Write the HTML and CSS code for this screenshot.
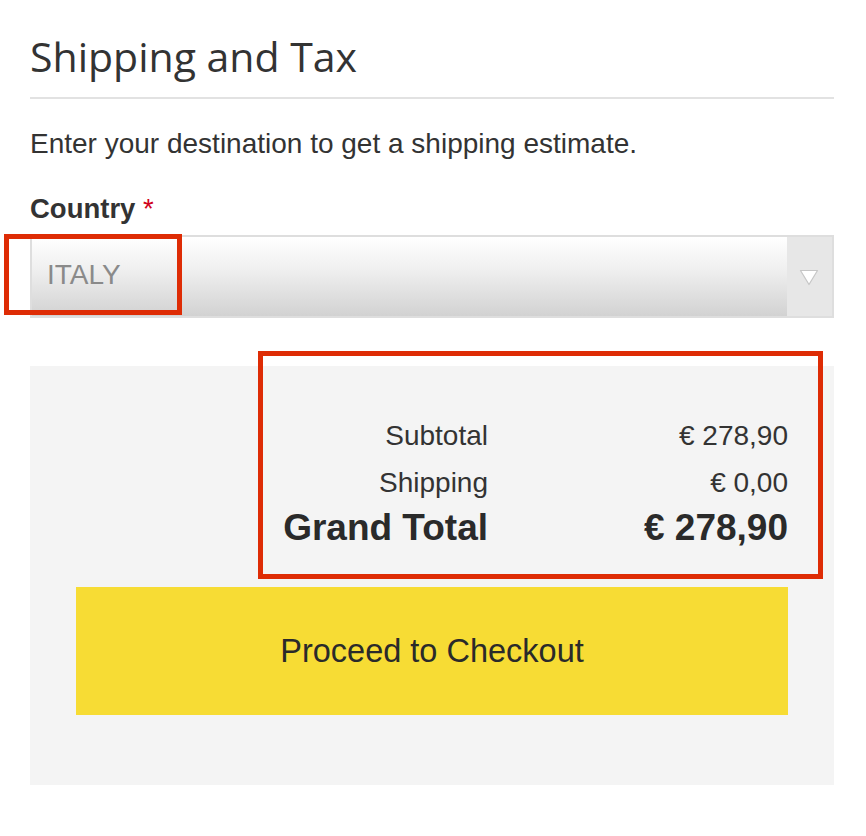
FILE: index.html
```html
<!DOCTYPE html>
<html lang="en">
<head>
<meta charset="utf-8">
<title>Shipping and Tax</title>
<link rel="stylesheet" href="styles.css">
</head>
<body>
<div class="page">
  <h1 class="title">Shipping and Tax</h1>
  <p class="intro">Enter your destination to get a shipping estimate.</p>
  <label class="label">Country <span class="req">*</span></label>
  <div class="select">
    <span class="select-value">ITALY</span>
    <span class="select-arrow">
      <svg width="20" height="17" viewBox="0 0 20 17"><polygon points="1.5,1.5 18.5,1.5 10,15.5" fill="#ffffff" stroke="#c6c6c6" stroke-width="1.2" stroke-linejoin="round"/></svg>
    </span>
  </div>
  <div class="panel">
    <div class="totals">
      <div class="t-label">Subtotal</div><div class="t-value">€ 278,90</div>
      <div class="t-label">Shipping</div><div class="t-value">€ 0,00</div>
      <div class="t-label grand">Grand Total</div><div class="t-value grand">€ 278,90</div>
    </div>
    <button class="checkout">Proceed to Checkout</button>
  </div>
  <div class="mark mark-1"></div>
  <div class="mark mark-2"></div>
</div>
</body>
</html>
```
FILE: styles.css
```css
html, body {
  margin: 0;
  padding: 0;
  background: #fff;
}
.page {
  position: relative;
  width: 804px;
  padding: 32px 0 0 30px;
  font-family: "Liberation Sans", Arial, sans-serif;
  color: #333;
}
.title {
  margin: 0;
  padding-bottom: 17px;
  border-bottom: 2px solid #e2e2e2;
  font-family: "Open Sans", sans-serif;
  font-weight: 400;
  font-size: 41px;
  line-height: 48px;
  color: #333;
}
.intro {
  margin: 29px 0 0;
  font-size: 28px;
  line-height: 32px;
  color: #333;
}
.label {
  display: block;
  margin-top: 33px;
  font-size: 27.5px;
  font-weight: 700;
  line-height: 32px;
  color: #333;
}
.req {
  color: #d0021b;
  font-weight: 400;
}
.select {
  margin-top: 10px;
  height: 83px;
  box-sizing: border-box;
  border: 2px solid #dedede;
  display: flex;
  align-items: stretch;
  background: linear-gradient(to bottom, #ffffff 0%, #f0f0f0 40%, #d2d2d2 100%);
}
.select-value {
  flex: 1;
  padding: 22px 0 0 15px;
  font-size: 28px;
  line-height: 32px;
  color: #8a8a8a;
}
.select-arrow {
  box-sizing: border-box;
  width: 45px;
  background: #e7e7e7;
  display: flex;
  align-items: center;
  justify-content: center;
  padding-top: 2px;
  padding-right: 2px;
}
.panel {
  margin-top: 48px;
  background: #f4f4f4;
  padding: 46px 46px 70px;
}
.totals {
  display: grid;
  grid-template-columns: 1fr 300px;
}
.t-label, .t-value {
  text-align: right;
  font-size: 28px;
  line-height: 47px;
  color: #333;
}
.t-label.grand, .t-value.grand {
  font-size: 37px;
  font-weight: 700;
  line-height: 43px;
  color: #2a2a2a;
}
.checkout {
  display: block;
  width: 100%;
  height: 128px;
  margin-top: 38px;
  border: 0;
  background: #f7dc34;
  font-family: "Liberation Sans", Arial, sans-serif;
  font-size: 32.5px;
  color: #2a2a2a;
  cursor: pointer;
}
.mark {
  position: absolute;
  box-sizing: border-box;
  border: 5px solid #de2c05;
}
.mark-1 {
  left: 4px;
  top: 234px;
  width: 178px;
  height: 81px;
}
.mark-2 {
  left: 258px;
  top: 351px;
  width: 565px;
  height: 228px;
}
```
